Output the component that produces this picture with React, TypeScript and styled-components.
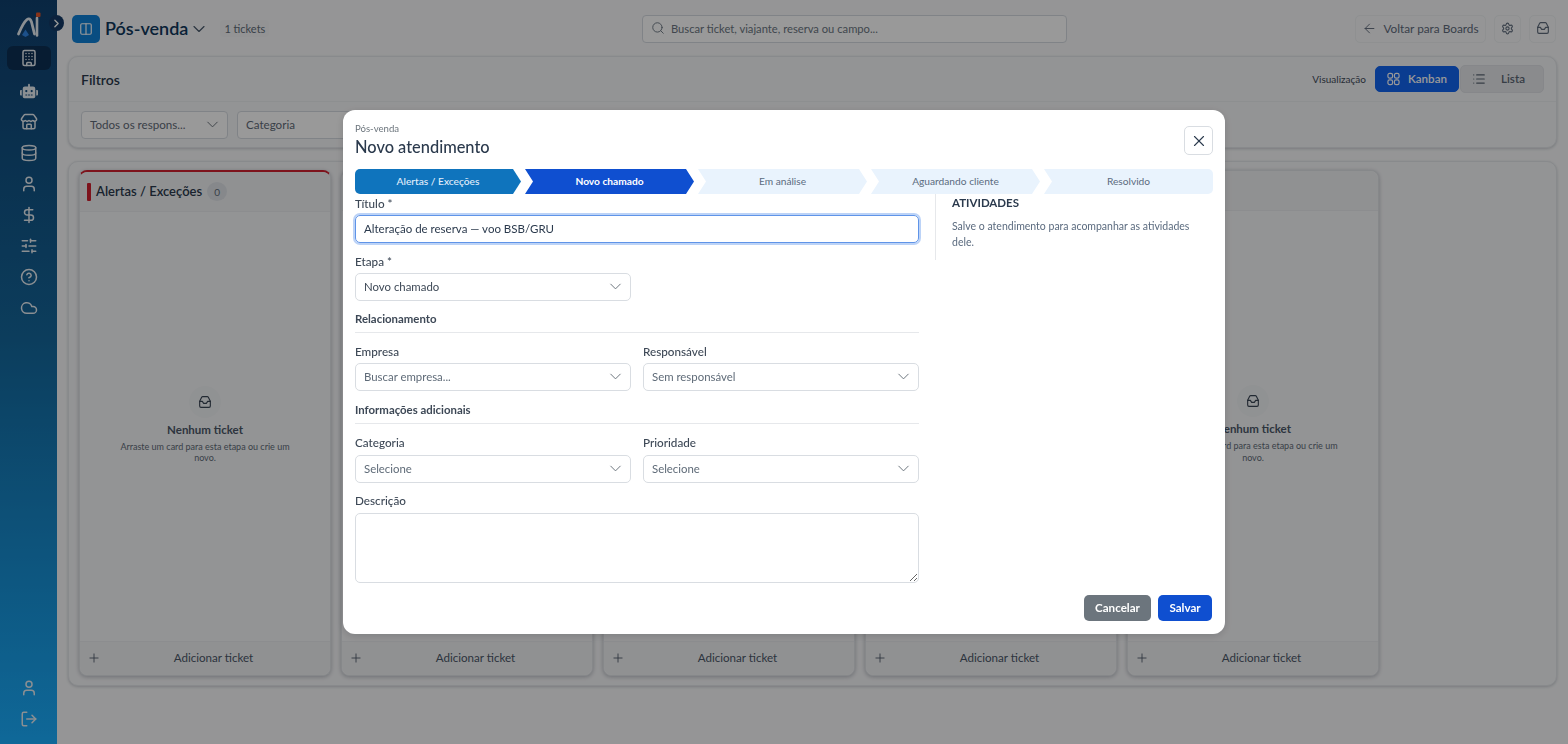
import styled, { createGlobalStyle } from "styled-components";
import {
  ArrowLeft,
  Building,
  ChevronDown,
  ChevronRight,
  CircleHelp,
  Cloud,
  Columns2,
  Database,
  DollarSign,
  List,
  LogOut,
  Plus,
  Search,
  Settings,
  SlidersHorizontal,
  Store,
  User,
  X,
} from "lucide-react";
import { FaRobot } from "react-icons/fa";

const GlobalStyle = createGlobalStyle`
  html, body {
    margin: 0;
    height: 100%;
    background: #f8f9fa;
    font-family: "Lato", "Noto Sans", sans-serif;
    color: #2b3a4d;
  }
  * { box-sizing: border-box; }
`;

const Shell = styled.div`
  display: flex;
  width: 1568px;
  height: 744px;
  overflow: hidden;
`;

const Sidebar = styled.aside`
  position: relative;
  width: 57px;
  flex: none;
  display: flex;
  flex-direction: column;
  align-items: center;
  background: linear-gradient(180deg, #10406f 0%, #14669a 45%, #19aeff 100%);
  color: #e8eef4;
  padding-top: 9px;
  padding-bottom: 10px;
`;

const LogoBox = styled.div`
  height: 32px;
  display: flex;
  align-items: center;
  justify-content: center;
`;

const CollapseToggle = styled.button`
  position: absolute;
  top: 15px;
  left: 49px;
  width: 15px;
  height: 16px;
  padding: 0;
  border: 0;
  border-radius: 50%;
  background: #143a66;
  color: #fff;
  display: flex;
  align-items: center;
  justify-content: center;
  z-index: 2;
`;

const NavList = styled.nav`
  display: flex;
  flex-direction: column;
  align-items: center;
  margin-top: 5px;
`;

const NavItem = styled.div<{ $active?: boolean }>`
  width: 44px;
  height: ${(props) => (props.$active ? "24px" : "31px")};
  margin-bottom: ${(props) => (props.$active ? "5.5px" : "0")};
  border-radius: 6px;
  display: flex;
  align-items: center;
  justify-content: center;
  background: ${(props) => (props.$active ? "#0d3054" : "transparent")};
`;

const NavBottom = styled(NavList)`
  margin-top: auto;
`;

const Main = styled.main`
  flex: 1;
  min-width: 0;
  display: flex;
  flex-direction: column;
  padding: 14px 11px 0 11px;
  gap: 13px;
`;

const TopBar = styled.header`
  display: flex;
  align-items: center;
  height: 29px;
  padding-left: 4px;
`;

const TitleGroup = styled.div`
  width: 570px;
  flex: none;
  display: flex;
  align-items: center;
`;

const BoardBadge = styled.div`
  width: 28px;
  height: 28px;
  border-radius: 5px;
  background: #0f80d8;
  color: #fff;
  display: flex;
  align-items: center;
  justify-content: center;
`;

const BoardTitle = styled.h1`
  margin: 0 0 2px 5px;
  font-size: 18px;
  font-weight: 600;
  color: #10375c;
`;

const TitleChevron = styled(ChevronDown)`
  margin-left: 1px;
  color: #4a5a6c;
`;

const TicketCount = styled.span`
  margin-left: 11px;
  padding: 2px 4px;
  border-radius: 4px;
  background: #f5f6f7;
  color: #5f6b78;
  font-size: 11px;
`;

const SearchBox = styled.div`
  width: 425px;
  height: 28px;
  flex: none;
  display: flex;
  align-items: center;
  gap: 6px;
  padding: 0 8px 1px;
  border: 1px solid #d6dbe1;
  border-radius: 4px;
  background: #fff;
  color: #6b7682;
  font-size: 11.2px;
`;

const TopActions = styled.div`
  margin-left: auto;
  display: flex;
  gap: 8px;
  margin-right: 1px;
`;

const GhostButton = styled.button<{ $wide?: boolean }>`
  height: 28px;
  width: ${(props) => (props.$wide ? "131px" : "27px")};
  padding: 0 0 1px;
  display: flex;
  align-items: center;
  justify-content: center;
  gap: 6px;
  border: 1px solid #eef0f2;
  border-radius: 5px;
  background: transparent;
  color: #5f6b7c;
  font: inherit;
  font-size: 11.8px;
`;

const Panel = styled.section`
  border: 1px solid #e3e6ea;
  border-radius: 10px;
  background: #f6f7f9;
  box-shadow: 0 1px 3px rgba(20, 30, 50, 0.2);
`;

const FilterHead = styled.div`
  height: 45px;
  padding: 0 12px;
  display: flex;
  align-items: center;
  justify-content: space-between;
  border-bottom: 1px solid #eceef1;
`;

const PanelTitle = styled.h2`
  margin: 0;
  font-size: 14px;
  font-weight: 600;
  color: #2b3a4d;
`;

const ViewSwitch = styled.div`
  display: flex;
  align-items: center;
  font-size: 12px;
`;

const ViewLabel = styled.span`
  font-size: 10px;
  color: #3f4b5a;
  margin-right: 9px;
`;

const ViewButton = styled.button<{ $active?: boolean }>`
  width: 84px;
  height: ${(props) => (props.$active ? "26px" : "28px")};
  margin-left: ${(props) => (props.$active ? "0" : "1px")};
  display: flex;
  align-items: center;
  gap: 8px;
  padding: 0 11px 1px;
  border: 1px solid ${(props) => (props.$active ? "#1164f0" : "#dfe2e6")};
  border-radius: 5px;
  background: ${(props) => (props.$active ? "#1164f0" : "#e6e8eb")};
  color: ${(props) => (props.$active ? "#fff" : "#5b6674")};
  font: inherit;
  font-size: 11.6px;
  font-weight: 600;
`;

const ViewText = styled.span`
  flex: 1;
  text-align: center;
`;

const FilterRow = styled.div`
  display: flex;
  gap: 9px;
  padding: 9px 12px 0;
  height: 45px;
`;

const FilterSelect = styled.div<{ $width: number }>`
  width: ${(props) => props.$width}px;
  height: 28px;
  padding: 0 5px 1px 8px;
  display: flex;
  align-items: center;
  justify-content: space-between;
  border: 1px solid #d6dbe1;
  border-radius: 4px;
  background: #fff;
  color: #5f6b78;
  font-size: 11.6px;
`;

const Board = styled(Panel)`
  height: 525px;
  display: flex;
  gap: 10px;
  padding: 8px 10px 9px;
`;

const Column = styled.div<{ $accent?: boolean }>`
  width: 252px;
  display: flex;
  flex-direction: column;
  border: 1px solid #e0e3e7;
  border-top: ${(props) => (props.$accent ? "2px solid #d0202f" : "1px solid #e0e3e7")};
  border-radius: 8px;
  background: #f6f7f9;
  box-shadow: 0 1px 4px rgba(20, 30, 50, 0.28);
`;

const ColumnHead = styled.div`
  height: 40px;
  flex: none;
  display: flex;
  align-items: center;
  gap: 5px;
  padding-left: 7px;
  background: #f1f2f4;
  border-bottom: 1px solid #e9ebee;
  border-radius: 8px 8px 0 0;
`;

const AccentBar = styled.span`
  width: 4px;
  height: 18px;
  border-radius: 1px;
  background: #d0202f;
`;

const ColumnName = styled.span`
  font-size: 13px;
  font-weight: 600;
  margin-bottom: 1px;
  color: #2b3a4d;
`;

const CountPill = styled.span`
  width: 20px;
  height: 19px;
  margin-left: 0;
  border-radius: 50%;
  background: #dfe3e8;
  color: #5f6b78;
  font-size: 10px;
  display: flex;
  align-items: center;
  justify-content: center;
`;

const ColumnBody = styled.div`
  flex: 1;
  display: flex;
  flex-direction: column;
  align-items: center;
  justify-content: center;
  padding: 0 36px 4px;
  text-align: center;
`;

const EmptyIcon = styled.div`
  width: 32px;
  height: 32px;
  border-radius: 50%;
  background: #f1f3f5;
  color: #3a4655;
  display: flex;
  align-items: center;
  justify-content: center;
  margin-bottom: 5px;
`;

const EmptyTitle = styled.div`
  font-size: 11.5px;
  font-weight: 700;
  color: #4b5768;
  margin-bottom: 5px;
`;

const EmptyText = styled.div`
  font-size: 9px;
  line-height: 11.5px;
  color: #5f6b78;
`;

const ColumnFooter = styled.div`
  height: 34px;
  flex: none;
  display: flex;
  align-items: center;
  padding: 0 7px 2px;
  border-top: 1px solid #e9ebee;
  background: #f1f2f4;
  border-radius: 0 0 8px 8px;
  color: #4b5768;
  font-size: 11.6px;
`;

const FooterLabel = styled.span`
  flex: 1;
  padding-left: 3px;
  text-align: center;
`;

const Backdrop = styled.div`
  position: fixed;
  inset: 0;
  display: flex;
  align-items: center;
  justify-content: center;
  background: rgba(0, 0, 0, 0.4);
  z-index: 10;
`;

const Modal = styled.div`
  width: 882px;
  height: 524px;
  padding: 12px;
  display: flex;
  flex-direction: column;
  border-radius: 12px;
  background: #fff;
  box-shadow: 0 2px 8px rgba(0, 0, 0, 0.15);
`;

const ModalHead = styled.div`
  height: 47px;
  flex: none;
  display: flex;
  justify-content: space-between;
  align-items: flex-start;
`;

const Eyebrow = styled.div`
  margin-top: 1px;
  font-size: 9.6px;
  line-height: 12px;
  color: #6c757d;
`;

const ModalTitle = styled.h2`
  margin: 1px 0 0;
  font-size: 16.4px;
  line-height: 22px;
  font-weight: 500;
  color: #2b3a4d;
`;

const CloseButton = styled.button`
  width: 29px;
  height: 29px;
  margin-top: 4px;
  padding: 0;
  display: flex;
  align-items: center;
  justify-content: center;
  border: 1px solid #d9dde2;
  border-radius: 5px;
  background: #fff;
  color: #2b3a4d;
`;

const Steps = styled.div`
  height: 25px;
  flex: none;
  display: flex;
`;

const Step = styled.div<{ $bg: string; $fg: string; $first?: boolean; $last?: boolean; $weight?: number }>`
  flex: ${(props) => (props.$first ? "0 0 166px" : "1")};
  min-width: 0;
  margin-left: ${(props) => (props.$first ? "0" : "4px")};
  padding-bottom: 2px;
  display: flex;
  align-items: center;
  justify-content: center;
  background: ${(props) => props.$bg};
  color: ${(props) => props.$fg};
  font-size: 10.2px;
  font-weight: ${(props) => props.$weight || 400};
  border-radius: ${(props) => (props.$first ? "5px 0 0 5px" : props.$last ? "0 5px 5px 0" : "0")};
  clip-path: ${(props) =>
    props.$first
      ? "polygon(0 0, calc(100% - 8px) 0, 100% 50%, calc(100% - 8px) 100%, 0 100%)"
      : props.$last
        ? "polygon(0 0, 100% 0, 100% 100%, 0 100%, 8px 50%)"
        : "polygon(0 0, calc(100% - 8px) 0, 100% 50%, calc(100% - 8px) 100%, 0 100%, 8px 50%)"};
`;

const ModalBody = styled.div`
  flex: 1;
  min-height: 0;
  display: flex;
`;

const FormColumn = styled.div`
  width: 564px;
  flex: none;
  display: flex;
  flex-direction: column;
`;

const Activities = styled.div`
  margin-left: 16px;
  height: 66px;
  padding: 0 16px;
  flex: 1;
  border-left: 1px solid #e6e8eb;
`;

const ActivitiesTitle = styled.div`
  font-size: 11.5px;
  line-height: 15px;
  margin-top: 1px;
  font-weight: 700;
  color: #2b3a4d;
`;

const ActivitiesText = styled.p`
  margin: 8px 0 0;
  font-size: 10.5px;
  line-height: 16px;
  color: #5b6b7f;
`;

const FieldLabel = styled.label<{ $loose?: boolean }>`
  display: block;
  font-size: 11.7px;
  line-height: 16px;
  font-weight: 500;
  color: #3d4856;
  margin-bottom: ${(props) => (props.$loose ? "5px" : "4px")};
`;

const Field = styled.div<{ $half?: boolean }>`
  width: ${(props) => (props.$half ? "276px" : "100%")};
`;

const TextInput = styled.div`
  height: 28px;
  padding: 0 8px 1px;
  display: flex;
  align-items: center;
  border: 1px solid #5f94e8;
  border-radius: 5px;
  box-shadow: 0 0 0 2px #bcd3f7;
  color: #2b3a4d;
  font-size: 11.5px;
`;

const SelectBox = styled.div<{ $placeholder?: boolean }>`
  height: 28px;
  padding: 0 5px 1px 8px;
  display: flex;
  align-items: center;
  justify-content: space-between;
  border: 1px solid #d9dde2;
  border-radius: 5px;
  color: ${(props) => (props.$placeholder ? "#5f6b78" : "#3d4856")};
  font-size: 11.4px;
`;

const SelectChevron = styled(ChevronDown).attrs({ size: 19, strokeWidth: 1.25 })`
  flex: none;
  color: #6c757d;
`;

const SectionHead = styled.div`
  font-size: 11.4px;
  line-height: 16px;
  font-weight: 700;
  color: #3d4856;
  padding-bottom: 5px;
  border-bottom: 1px solid #e6e8eb;
  margin-bottom: 10px;
`;

const Row = styled.div`
  display: flex;
  gap: 12px;
`;

const FieldGroup = styled.div<{ $top: number }>`
  margin-top: ${(props) => props.$top}px;
`;

const TextArea = styled.textarea`
  display: block;
  width: 100%;
  height: 70px;
  border: 1px solid #d9dde2;
  border-radius: 5px;
  background: #fff;
`;

const ModalFooter = styled.div`
  display: flex;
  justify-content: flex-end;
  gap: 7px;
  margin-top: auto;
  margin-right: 1px;
  margin-bottom: 1px;
  flex: none;
`;

const FooterButton = styled.button<{ $primary?: boolean }>`
  width: ${(props) => (props.$primary ? "54px" : "67px")};
  height: 26px;
  padding: 0 0 1px;
  border: 0;
  border-radius: 5px;
  background: ${(props) => (props.$primary ? "#0f4fd0" : "#6c757d")};
  color: #fff;
  font: inherit;
  font-size: 11.6px;
  font-weight: 700;
`;

const LogoMark = () => (
  <svg width="28" height="28" viewBox="0 0 28 28" fill="none">
    <path d="M3.5 23 C6 17 9 11 12 8.5 C14 7 15.5 8 16.5 11 L19.5 23" stroke="#e8eef4" strokeWidth="2.8" strokeLinecap="round" strokeLinejoin="round" />
    <path d="M7 24 L10.5 18.5 L14 24 L10.5 26 Z" fill="#2f86e6" />
    <path d="M22 7 L22 24.5" stroke="#e8eef4" strokeWidth="2.6" strokeLinecap="round" />
    <rect x="21" y="1.5" width="4.5" height="4.5" rx="1" fill="#e2552a" />
  </svg>
);

const GridIcon = () => (
  <svg width="14" height="14" viewBox="0 0 14 14" fill="none" stroke="currentColor" strokeWidth="1.3">
    <rect x="1" y="1" width="5" height="5" rx="1.8" />
    <rect x="8" y="1" width="5" height="5" rx="1.8" />
    <rect x="1" y="8" width="5" height="5" rx="1.8" />
    <rect x="8" y="8" width="5" height="5" rx="1.8" />
  </svg>
);

const TrayIcon = ({ size }: { size: number }) => (
  <svg width={size} height={size} viewBox="0 0 24 24" fill="none" stroke="currentColor" strokeWidth="1.7" strokeLinecap="round" strokeLinejoin="round">
    <path d="M4 11 L7 5 a2 2 0 0 1 2 -1 h6 a2 2 0 0 1 2 1 l3 6 v7 a2 2 0 0 1 -2 2 H6 a2 2 0 0 1 -2 -2 z" />
    <path d="M4 11 h4 l2 3 h4 l2 -3 h4" />
  </svg>
);

const topNav = [Building, FaRobot, Store, Database, User, DollarSign, SlidersHorizontal, CircleHelp, Cloud];
const stageCount = [0, 1, 2, 3, 4];

const App = () => {
  return (
    <>
      <GlobalStyle />
      <Shell>
        <Sidebar>
          <LogoBox>
            <LogoMark />
          </LogoBox>
          <CollapseToggle>
            <ChevronRight size={13} strokeWidth={2.5} />
          </CollapseToggle>
          <NavList>
            {topNav.map((Icon, i) => (
              <NavItem key={i} $active={i === 0}>
                <Icon size={18} />
              </NavItem>
            ))}
          </NavList>
          <NavBottom>
            <NavItem>
              <User size={18} />
            </NavItem>
            <NavItem>
              <LogOut size={18} />
            </NavItem>
          </NavBottom>
        </Sidebar>
        <Main>
          <TopBar>
            <TitleGroup>
              <BoardBadge>
                <Columns2 size={14} />
              </BoardBadge>
              <BoardTitle>Pós-venda</BoardTitle>
              <TitleChevron size={20} strokeWidth={1.4} />
              <TicketCount>1 tickets</TicketCount>
            </TitleGroup>
            <SearchBox>
              <Search size={14} strokeWidth={1.6} />
              Buscar ticket, viajante, reserva ou campo...
            </SearchBox>
            <TopActions>
              <GhostButton $wide>
                <ArrowLeft size={15} strokeWidth={1.5} />
                Voltar para Boards
              </GhostButton>
              <GhostButton>
                <Settings size={13} />
              </GhostButton>
              <GhostButton>
                <TrayIcon size={16} />
              </GhostButton>
            </TopActions>
          </TopBar>
          <Panel>
            <FilterHead>
              <PanelTitle>Filtros</PanelTitle>
              <ViewSwitch>
                <ViewLabel>Visualização</ViewLabel>
                <ViewButton $active>
                  <GridIcon />
                  <ViewText>Kanban</ViewText>
                </ViewButton>
                <ViewButton>
                  <List size={14} />
                  <ViewText>Lista</ViewText>
                </ViewButton>
              </ViewSwitch>
            </FilterHead>
            <FilterRow>
              <FilterSelect $width={147}>
                Todos os respons...
                <SelectChevron />
              </FilterSelect>
              <FilterSelect $width={147}>Categoria</FilterSelect>
            </FilterRow>
          </Panel>
          <Board>
            {stageCount.map((i) => (
              <Column key={i} $accent={i === 0}>
                <ColumnHead>
                  {i === 0 && <AccentBar />}
                  {i === 0 && <ColumnName>Alertas / Exceções</ColumnName>}
                  {i === 0 && <CountPill>0</CountPill>}
                </ColumnHead>
                <ColumnBody>
                  <EmptyIcon>
                    <TrayIcon size={16} />
                  </EmptyIcon>
                  <EmptyTitle>Nenhum ticket</EmptyTitle>
                  <EmptyText>Arraste um card para esta etapa ou crie um novo.</EmptyText>
                </ColumnBody>
                <ColumnFooter>
                  <Plus size={14} strokeWidth={1.5} />
                  <FooterLabel>Adicionar ticket</FooterLabel>
                </ColumnFooter>
              </Column>
            ))}
          </Board>
        </Main>
      </Shell>
      <Backdrop>
        <Modal>
          <ModalHead>
            <div>
              <Eyebrow>Pós-venda</Eyebrow>
              <ModalTitle>Novo atendimento</ModalTitle>
            </div>
            <CloseButton>
              <X size={18} strokeWidth={1.5} />
            </CloseButton>
          </ModalHead>
          <Steps>
            <Step $first $bg="#0f74bd" $fg="#e3eefb" $weight={500}>Alertas / Exceções</Step>
            <Step $bg="#0f4fd0" $fg="#fff" $weight={700}>Novo chamado</Step>
            <Step $bg="#e9f3fd" $fg="#5b6b7f">Em análise</Step>
            <Step $bg="#e9f3fd" $fg="#5b6b7f">Aguardando cliente</Step>
            <Step $last $bg="#e9f3fd" $fg="#5b6b7f">Resolvido</Step>
          </Steps>
          <ModalBody>
            <FormColumn>
              <FieldGroup $top={1}>
                <FieldLabel>Título *</FieldLabel>
                <TextInput>Alteração de reserva — voo BSB/GRU</TextInput>
              </FieldGroup>
              <FieldGroup $top={10}>
                <Field $half>
                  <FieldLabel>Etapa *</FieldLabel>
                  <SelectBox>
                    Novo chamado
                    <SelectChevron />
                  </SelectBox>
                </Field>
              </FieldGroup>
              <FieldGroup $top={10}>
                <SectionHead>Relacionamento</SectionHead>
                <Row>
                  <Field $half>
                    <FieldLabel>Empresa</FieldLabel>
                    <SelectBox $placeholder>
                      Buscar empresa...
                      <SelectChevron />
                    </SelectBox>
                  </Field>
                  <Field $half>
                    <FieldLabel>Responsável</FieldLabel>
                    <SelectBox $placeholder>
                      Sem responsável
                      <SelectChevron />
                    </SelectBox>
                  </Field>
                </Row>
              </FieldGroup>
              <FieldGroup $top={11}>
                <SectionHead>Informações adicionais</SectionHead>
                <Row>
                  <Field $half>
                    <FieldLabel $loose>Categoria</FieldLabel>
                    <SelectBox $placeholder>
                      Selecione
                      <SelectChevron />
                    </SelectBox>
                  </Field>
                  <Field $half>
                    <FieldLabel $loose>Prioridade</FieldLabel>
                    <SelectBox $placeholder>
                      Selecione
                      <SelectChevron />
                    </SelectBox>
                  </Field>
                </Row>
              </FieldGroup>
              <FieldGroup $top={9}>
                <FieldLabel $loose>Descrição</FieldLabel>
                <TextArea />
              </FieldGroup>
            </FormColumn>
            <Activities>
              <ActivitiesTitle>ATIVIDADES</ActivitiesTitle>
              <ActivitiesText>Salve o atendimento para acompanhar as atividades dele.</ActivitiesText>
            </Activities>
          </ModalBody>
          <ModalFooter>
            <FooterButton>Cancelar</FooterButton>
            <FooterButton $primary>Salvar</FooterButton>
          </ModalFooter>
        </Modal>
      </Backdrop>
    </>
  );
};

export default App;
